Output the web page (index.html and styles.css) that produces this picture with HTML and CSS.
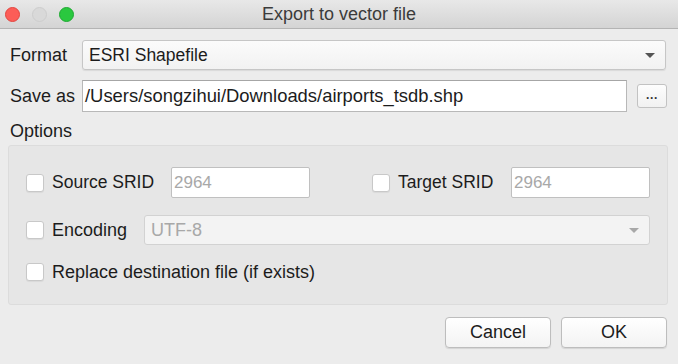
FILE: index.html
```html
<!DOCTYPE html>
<html>
<head>
<meta charset="utf-8">
<link rel="stylesheet" href="styles.css">
</head>
<body>
<div class="window">
  <div class="titlebar">
    <div class="lights">
      <span class="light red"></span>
      <span class="light gray"></span>
      <span class="light green"></span>
    </div>
    <div class="title">Export to vector file</div>
  </div>
  <div class="content">
    <div class="row row-format">
      <span class="label">Format</span>
      <div class="combo combo-format">
        <span class="combo-text">ESRI Shapefile</span>
        <span class="arrow"></span>
      </div>
    </div>
    <div class="row row-save">
      <span class="label">Save as</span>
      <div class="input input-path">/Users/songzihui/Downloads/airports_tsdb.shp</div>
      <div class="dots">···</div>
    </div>
    <div class="options-label">Options</div>
    <div class="group">
      <div class="grow grow1">
        <div class="pair pair-source">
          <span class="check"></span>
          <span class="clabel srid-label">Source SRID</span>
          <div class="input small-input">2964</div>
        </div>
        <div class="pair pair-target">
          <span class="check"></span>
          <span class="clabel target-label">Target SRID</span>
          <div class="input small-input">2964</div>
        </div>
      </div>
      <div class="grow grow2">
        <span class="check"></span>
        <span class="clabel enc-label">Encoding</span>
        <div class="combo combo-enc">
          <span>UTF-8</span>
          <span class="arrow light-arrow"></span>
        </div>
      </div>
      <div class="grow grow3">
        <span class="check"></span>
        <span class="clabel">Replace destination file (if exists)</span>
      </div>
    </div>
    <div class="buttons">
      <div class="btn">Cancel</div>
      <div class="btn">OK</div>
    </div>
  </div>
</div>
</body>
</html>
```
FILE: styles.css
```css
* { box-sizing: border-box; }
html, body { margin: 0; padding: 0; }
body {
  width: 678px;
  height: 364px;
  overflow: hidden;
  background: #ececec;
  font-family: "Liberation Sans", Arial, sans-serif;
  color: #1c1c1c;
  font-size: 18px;
}
.window { width: 678px; height: 364px; display: flex; flex-direction: column; }
.titlebar {
  height: 29px;
  flex: none;
  background: linear-gradient(#e8e8e8, #d4d4d4);
  border-bottom: 1px solid #b4b4b4;
  display: flex;
  align-items: center;
  position: relative;
}
.lights { display: flex; gap: 11px; padding-left: 5px; }
.light { width: 15px; height: 15px; border-radius: 50%; display: block; }
.light.red { background: #fc5d57; border: 1px solid #e3453f; }
.light.gray { background: #d9d9d9; border: 1px solid #cdcdcd; margin-left: 1px; }
.light.green { background: #2ac83f; border: 1px solid #1faa32; margin-left: 1px; }
.title {
  position: absolute;
  left: 0; right: 0; top: 0; bottom: 0;
  display: flex; align-items: center; justify-content: center;
  font-size: 18px;
  color: #3b3b3b;
}
.content { padding: 11px 10px 0 10px; display: flex; flex-direction: column; }
.row { display: flex; align-items: center; }
.label { width: 72px; }
.combo {
  display: flex; align-items: center; justify-content: space-between;
  background: linear-gradient(#fbfbfb, #f2f2f2);
  border: 1px solid #c6c6c6;
  border-radius: 3px;
  padding: 0 10px 0 6px;
  box-shadow: 0 1px 1px rgba(0,0,0,0.08);
}
.combo-format { width: 584px; height: 30px; }
.combo-text { font-size: 17.5px; }
.arrow {
  width: 0; height: 0;
  border-left: 5px solid transparent;
  border-right: 5px solid transparent;
  border-top: 5px solid #555;
}
.light-arrow { border-top-color: #a8a8a8; }
.row-save { margin-top: 10px; }
.input {
  background: #fff;
  border: 1px solid #b8b8b8;
  border-top-color: #a6a6a6;
  display: flex; align-items: center;
  padding-left: 2px;
}
.input-path { width: 545px; height: 32px; font-size: 18.4px; }
.dots {
  margin-left: 10px;
  width: 30px; height: 24px;
  background: linear-gradient(#fdfdfd, #f1f1f1);
  border: 1px solid #c2c2c2;
  border-radius: 3px;
  display: flex; align-items: center; justify-content: center;
  font-size: 12px; font-weight: bold; color: #333;
  padding-top: 3px;
}
.options-label { margin-top: 10px; height: 18px; line-height: 18px; }
.group {
  margin: 5px 0 0 -2px;
  width: 660px;
  height: 160px;
  background: #e6e6e6;
  border: 1px solid #dcdcdc;
  border-radius: 3px;
  padding: 21px 0 0 17px;
  display: flex; flex-direction: column;
}
.grow { display: flex; align-items: center; }
.grow1 { height: 31px; }
.pair { display: flex; align-items: center; }
.pair-target { margin-left: 62px; }
.check {
  width: 18px; height: 18px;
  flex: none;
  background: #fff;
  border: 1px solid #c8c8c8;
  border-radius: 3px;
  box-shadow: 0 1px 1px rgba(0,0,0,0.06);
  display: block;
}
.clabel { margin-left: 8px; }
.srid-label { width: 119px; font-size: 17.5px; }
.target-label { width: 113px; font-size: 17.5px; }
.small-input { width: 139px; height: 31px; color: #a8a8a8; font-size: 17px; border-color: #c0c0c0; border-radius: 2px; }
.grow2 { margin-top: 17px; height: 30px; }
.enc-label { width: 92px; }
.combo-enc { width: 506px; height: 30px; color: #a8a8a8; background: #f3f3f3; border-color: #d2d2d2; padding-left: 6px; box-shadow: none; }
.grow3 { margin-top: 12px; height: 30px; }
.buttons { display: flex; justify-content: flex-end; gap: 10px; margin-top: 12px; padding-right: 1px; }
.btn {
  width: 106px; height: 31px;
  background: linear-gradient(#ffffff, #f3f3f3);
  border: 1px solid #bdbdbd;
  border-radius: 4px;
  display: flex; align-items: center; justify-content: center;
  box-shadow: 0 1px 1px rgba(0,0,0,0.1);
}
```
